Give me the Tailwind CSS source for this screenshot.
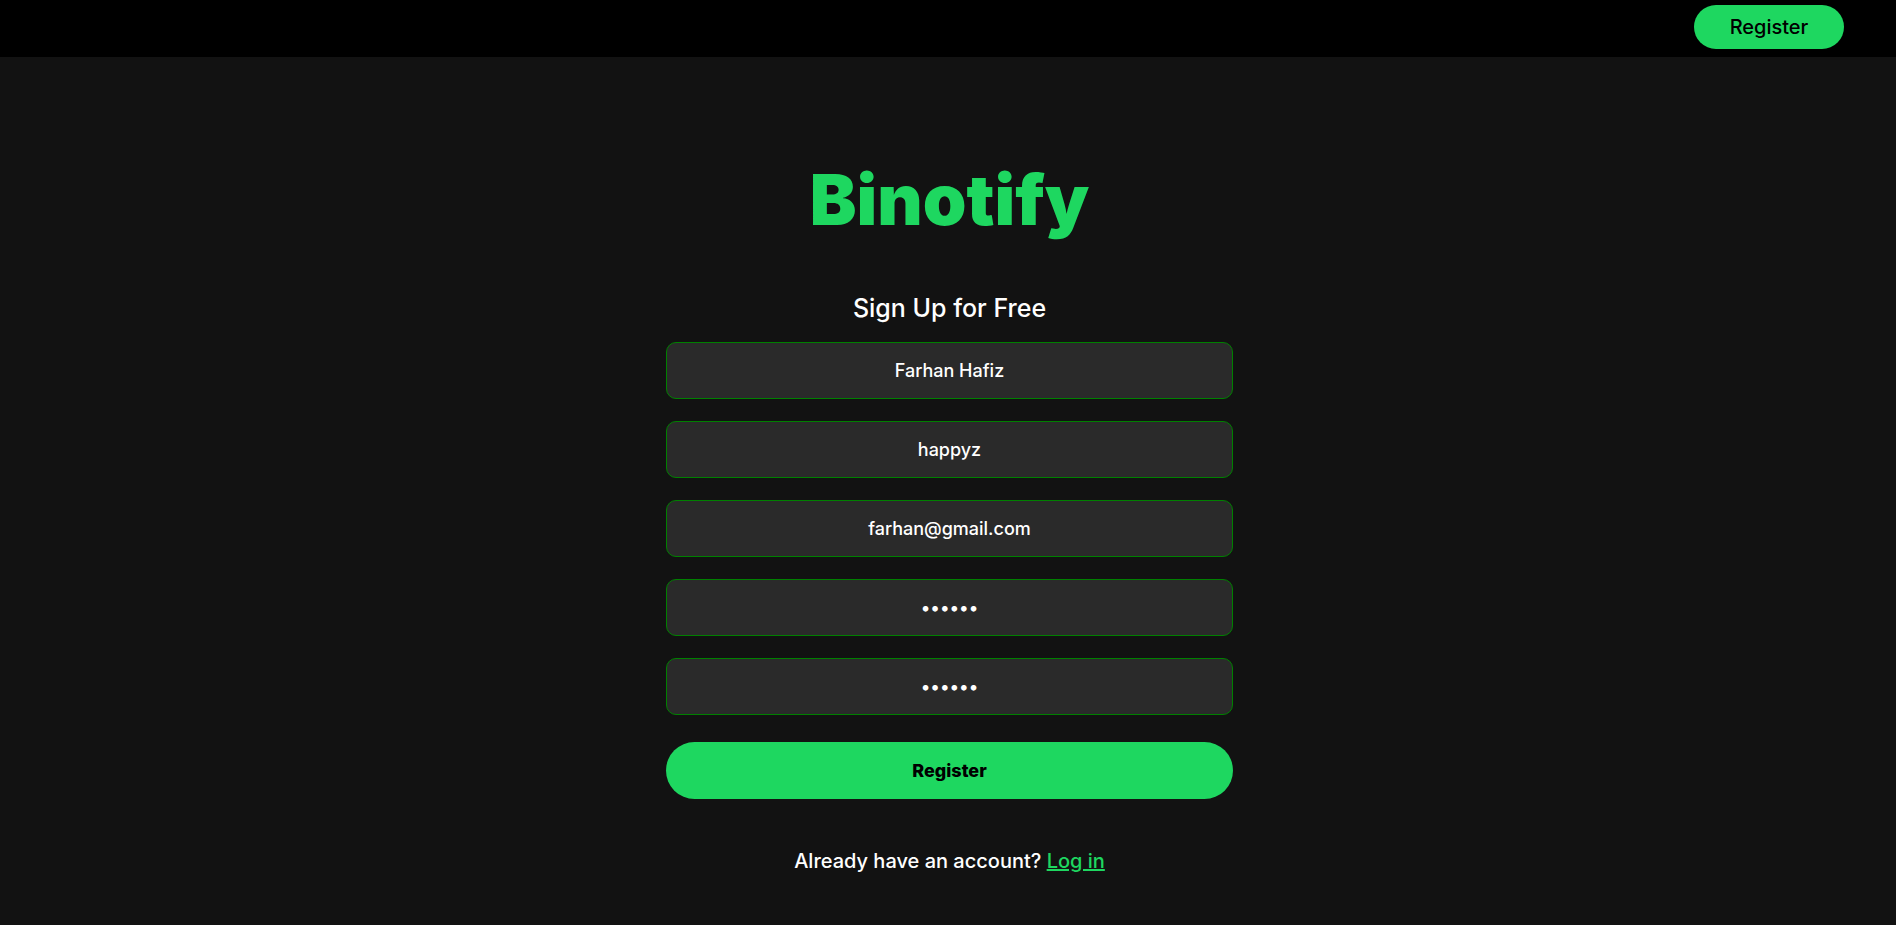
<!DOCTYPE html>
<html lang="en">
<head>
<meta charset="utf-8">
<meta name="viewport" content="width=device-width, initial-scale=1">
<title>Binotify</title>
<script src="https://cdn.jsdelivr.net/npm/@tailwindcss/browser@4"></script>
</head>
<body class="min-h-screen bg-[#121212] font-['Inter',sans-serif] font-medium text-white">
<header class="flex h-[57px] justify-end bg-black px-[52px] pt-[5px]">
<button type="button" class="h-11 w-[150px] rounded-full bg-[#1ed760] text-xl font-medium text-black">Register</button>
</header>
<main class="flex justify-center pt-[95px] pl-[3px]">
<div class="flex w-[30%] min-w-72 flex-col items-center">
<h1 class="text-[70px] leading-[96px] font-black text-[#1ed760]">Binotify</h1>
<form class="mt-10 flex w-full flex-col items-center">
<h2 class="mb-3.5 text-[25px] leading-10 font-medium">Sign Up for Free</h2>
<div class="flex w-full flex-col gap-[22px]">
<input type="text" aria-label="Name" value="Farhan Hafiz" class="h-[57px] w-full rounded-[10px] border border-[#008000] bg-[#2a2a2a] text-center text-lg">
<input type="text" aria-label="Username" value="happyz" class="h-[57px] w-full rounded-[10px] border border-[#008000] bg-[#2a2a2a] text-center text-lg">
<input type="email" aria-label="Email" value="farhan@gmail.com" class="h-[57px] w-full rounded-[10px] border border-[#008000] bg-[#2a2a2a] text-center text-lg">
<input type="password" aria-label="Password" value="farhan" class="h-[57px] w-full rounded-[10px] border border-[#008000] bg-[#2a2a2a] text-center text-lg">
<input type="password" aria-label="Confirm password" value="farhan" class="h-[57px] w-full rounded-[10px] border border-[#008000] bg-[#2a2a2a] text-center text-lg">
</div>
<button type="submit" class="mt-[27px] h-[57px] w-full rounded-full bg-[#1ed760] text-lg font-extrabold text-black">Register</button>
</form>
<p class="mt-12 text-xl whitespace-nowrap">Already have an account? <a href="#" class="text-[#1ed760] underline">Log in</a></p>
</div>
</main>
</body>
</html>
